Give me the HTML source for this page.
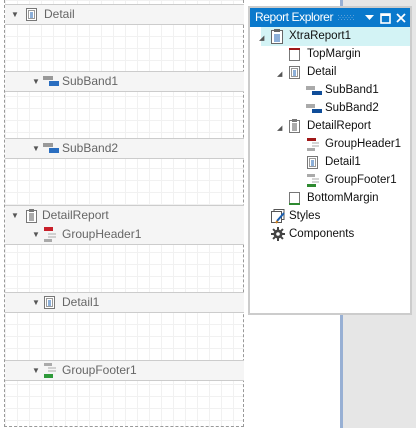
<!DOCTYPE html><html><head><style>
body{margin:0;width:416px;height:428px;overflow:hidden;position:relative;background:#e6e6e6;font-family:"Liberation Sans",sans-serif;font-size:12px}
.canvas{position:absolute;left:0;top:0;width:341px;height:428px;background:#fff}
.vline{position:absolute;left:340px;top:0;width:3px;height:428px;background:#98b0d4}
.grid{position:absolute;left:5px;top:0;width:239px;height:427px;background-image:linear-gradient(#f1f1f1 1px,transparent 1px),linear-gradient(90deg,#f1f1f1 1px,transparent 1px);background-size:12px 12px}
.dash{position:absolute;left:4px;top:0;width:240px;height:427px;border-left:1px dashed #999;border-right:1px dashed #999;border-bottom:1px dashed #999;box-sizing:border-box}
.band{position:absolute;left:5px;width:239px;height:19px;background:#f5f5f5;border-top:1px solid #ccc;border-bottom:1px solid #ccc;color:#666;font-size:12px;line-height:19px}
.band .a{position:absolute;top:0;font-size:8px;color:#555}
.band .t{position:absolute;top:0}
.ic{position:absolute}
.panel{position:absolute;left:248px;top:6px;width:164px;height:309px;background:#fff;border:2px solid #ccc;box-sizing:border-box}
.hdr{position:absolute;left:0;top:0;width:160px;height:19px;background:#0a79cc;color:#fff;font-size:12px;line-height:19px}
.row{position:absolute;height:18px;line-height:18px;color:#111;font-size:11.5px}
.tri{position:absolute;font-size:7px;color:#555}
</style></head><body>
<div class="canvas"></div>
<div class="grid"></div>
<div class="dash"></div>
<div class="vline"></div>

<div class="band" style="top:4px"><span class="a" style="left:6px">▼</span>
<svg class="ic" style="left:21px;top:3px" width="12" height="14"><rect x="0.5" y="0.5" width="10" height="12" fill="#fff" stroke="#777"/><rect x="2.5" y="2.5" width="6" height="8" fill="none" stroke="#999"/><path d="M4 5h3M4 7h3M4 9h3" stroke="#1a5fb0"/></svg><span class="t" style="left:39px">Detail</span></div>
<div class="band" style="top:71px"><span class="a" style="left:27px">▼</span>
<svg class="ic" style="left:38px;top:4px" width="18" height="12"><rect x="0" y="0" width="10" height="4" fill="#999"/><rect x="6" y="5" width="10" height="5" fill="#2a6ec0"/></svg><span class="t" style="left:57px">SubBand1</span></div>
<div class="band" style="top:138px"><span class="a" style="left:27px">▼</span>
<svg class="ic" style="left:38px;top:4px" width="18" height="12"><rect x="0" y="0" width="10" height="4" fill="#999"/><rect x="6" y="5" width="10" height="5" fill="#2a6ec0"/></svg><span class="t" style="left:57px">SubBand2</span></div>
<div class="band" style="top:205px;height:19px"><span class="a" style="left:6px">▼</span>
<svg class="ic" style="left:21px;top:3px" width="12" height="14"><rect x="0.5" y="1.5" width="10" height="12" fill="#fff" stroke="#777"/><rect x="3" y="0" width="5" height="3" fill="#777"/><path d="M3 5h5M3 7h5M3 9h5M3 11h5" stroke="#555"/></svg><span class="t" style="left:37px">DetailReport</span></div>
<div class="band" style="top:225px;border-top:none"><span class="a" style="left:27px">▼</span>
<svg class="ic" style="left:39px;top:2px" width="16" height="16"><rect x="0" y="0" width="9" height="4" fill="#c8202a"/><path d="M4 7h8M4 10h8" stroke="#aaa"/><rect x="0" y="12" width="8" height="3" fill="#aaa"/></svg><span class="t" style="left:57px">GroupHeader1</span></div>
<div class="band" style="top:292px"><span class="a" style="left:27px">▼</span>
<svg class="ic" style="left:39px;top:3px" width="12" height="14"><rect x="0.5" y="0.5" width="10" height="12" fill="#fff" stroke="#777"/><rect x="2.5" y="2.5" width="6" height="8" fill="none" stroke="#999"/><path d="M4 5h3M4 7h3M4 9h3" stroke="#1a5fb0"/></svg><span class="t" style="left:57px">Detail1</span></div>
<div class="band" style="top:360px"><span class="a" style="left:27px">▼</span>
<svg class="ic" style="left:39px;top:2px" width="16" height="16"><rect x="0" y="0" width="8" height="3" fill="#aaa"/><path d="M4 5h8M4 8h8" stroke="#aaa"/><rect x="0" y="11" width="9" height="4" fill="#2e9a3a"/></svg><span class="t" style="left:57px">GroupFooter1</span></div>

<div class="panel">
<div class="hdr"><span style="position:absolute;left:5px;letter-spacing:-0.4px">Report Explorer</span>
<svg style="position:absolute;left:88px;top:7px" width="20" height="6"><g fill="#5b9fd8"><rect x="0" y="0" width="1" height="1"/><rect x="3" y="0" width="1" height="1"/><rect x="6" y="0" width="1" height="1"/><rect x="9" y="0" width="1" height="1"/><rect x="12" y="0" width="1" height="1"/><rect x="15" y="0" width="1" height="1"/><rect x="1.5" y="2" width="1" height="1"/><rect x="4.5" y="2" width="1" height="1"/><rect x="7.5" y="2" width="1" height="1"/><rect x="10.5" y="2" width="1" height="1"/><rect x="13.5" y="2" width="1" height="1"/><rect x="0" y="4" width="1" height="1"/><rect x="3" y="4" width="1" height="1"/><rect x="6" y="4" width="1" height="1"/><rect x="9" y="4" width="1" height="1"/><rect x="12" y="4" width="1" height="1"/><rect x="15" y="4" width="1" height="1"/></g></svg>
<svg style="position:absolute;left:115px;top:5px" width="44" height="11"><path d="M0 2h9l-4.5 5z" fill="#fff"/><rect x="16" y="1" width="9" height="9" fill="none" stroke="#fff" stroke-width="1.6"/><rect x="16" y="1" width="9" height="2" fill="#fff"/><path d="M32 1l8 8M40 1l-8 8" stroke="#fff" stroke-width="1.8"/></svg></div>
<div style="position:absolute;left:11px;top:19px;width:149px;height:19px;background:#d3f3f5"></div>
<span class="tri" style="left:9px;top:26px">◢</span>
<svg class="ic" style="left:21px;top:21px" width="13" height="16"><rect x="0.5" y="1.5" width="11" height="13" fill="#fff" stroke="#666"/><rect x="3" y="0" width="6" height="3" fill="#666"/><path d="M3 6h6M3 8h6M3 10h6M3 12h6" stroke="#1a5fb0"/></svg>
<div class="row" style="left:39px;top:19px">XtraReport1</div>
<svg class="ic" style="left:39px;top:40px" width="12" height="14"><rect x="0.5" y="1.5" width="10" height="11" fill="#fff" stroke="#777"/><rect x="0" y="0" width="11" height="2" fill="#a01818"/></svg>
<div class="row" style="left:57px;top:37px">TopMargin</div>
<span class="tri" style="left:27px;top:62px">◢</span>
<svg class="ic" style="left:39px;top:58px" width="12" height="14"><rect x="0.5" y="0.5" width="10" height="12" fill="#fff" stroke="#777"/><rect x="2.5" y="2.5" width="6" height="8" fill="none" stroke="#999"/><path d="M4 5h3M4 7h3M4 9h3" stroke="#1a5fb0"/></svg>
<div class="row" style="left:57px;top:55px">Detail</div>
<svg class="ic" style="left:56px;top:78px" width="18" height="12"><rect x="0" y="0" width="9" height="4" fill="#aaa"/><rect x="6" y="5" width="10" height="4" fill="#0f4d99"/></svg>
<div class="row" style="left:75px;top:73px">SubBand1</div>
<svg class="ic" style="left:56px;top:96px" width="18" height="12"><rect x="0" y="0" width="9" height="4" fill="#aaa"/><rect x="6" y="5" width="10" height="4" fill="#0f4d99"/></svg>
<div class="row" style="left:75px;top:91px">SubBand2</div>
<span class="tri" style="left:27px;top:116px">◢</span>
<svg class="ic" style="left:39px;top:111px" width="12" height="15"><rect x="0.5" y="1.5" width="10" height="12" fill="#fff" stroke="#777"/><rect x="3" y="0" width="5" height="3" fill="#777"/><path d="M3 5h5M3 7h5M3 9h5M3 11h5" stroke="#555"/></svg>
<div class="row" style="left:57px;top:109px">DetailReport</div>
<svg class="ic" style="left:57px;top:130px" width="16" height="16"><rect x="0" y="0" width="9" height="3" fill="#a01818"/><path d="M5 5h7M5 8h7" stroke="#aaa"/><rect x="0" y="10" width="8" height="3" fill="#aaa"/></svg>
<div class="row" style="left:75px;top:127px">GroupHeader1</div>
<svg class="ic" style="left:57px;top:148px" width="12" height="14"><rect x="0.5" y="0.5" width="10" height="12" fill="#fff" stroke="#777"/><rect x="2.5" y="2.5" width="6" height="8" fill="none" stroke="#999"/><path d="M4 5h3M4 7h3M4 9h3" stroke="#1a5fb0"/></svg>
<div class="row" style="left:75px;top:145px">Detail1</div>
<svg class="ic" style="left:57px;top:166px" width="16" height="16"><rect x="0" y="0" width="8" height="3" fill="#aaa"/><path d="M5 5h7M5 8h7" stroke="#aaa"/><rect x="0" y="10" width="9" height="3" fill="#2e8a30"/></svg>
<div class="row" style="left:75px;top:163px">GroupFooter1</div>
<svg class="ic" style="left:39px;top:184px" width="12" height="14"><rect x="0.5" y="0.5" width="10" height="11" fill="#fff" stroke="#777"/><rect x="0" y="11" width="11" height="2" fill="#2e8a30"/></svg>
<div class="row" style="left:57px;top:181px">BottomMargin</div>
<svg class="ic" style="left:21px;top:201px" width="16" height="16"><rect x="0.5" y="2.5" width="10" height="11" fill="#fff" stroke="#555"/><path d="M3 2.5v-2h10v10h-2" fill="none" stroke="#555"/><path d="M6 12l7-8" stroke="#1a5fb0" stroke-width="2"/><path d="M5 14l1.5-2" stroke="#d08020" stroke-width="2"/></svg>
<div class="row" style="left:39px;top:199px">Styles</div>
<svg class="ic" style="left:21px;top:219px" width="14" height="14" viewBox="0 0 14 14"><g fill="#444"><circle cx="7" cy="7" r="4.5"/><rect x="6" y="0" width="2" height="14"/><rect x="0" y="6" width="14" height="2"/><rect x="6" y="0" width="2" height="14" transform="rotate(45 7 7)"/><rect x="6" y="0" width="2" height="14" transform="rotate(-45 7 7)"/></g><circle cx="7" cy="7" r="1.8" fill="#fff"/></svg>
<div class="row" style="left:39px;top:217px">Components</div>
</div>
</body></html>
